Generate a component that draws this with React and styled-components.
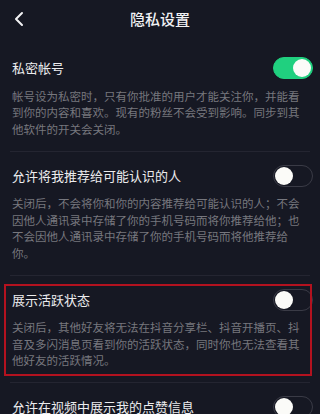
import styled, { createGlobalStyle } from "styled-components";
import { useState } from "react";

const GlobalStyle = createGlobalStyle`
  html, body {
    margin: 0;
    padding: 0;
    background: #161823;
    overflow: hidden;
  }
  * {
    box-sizing: border-box;
  }
`;

const settings = [
  {
    title: "私密帐号",
    on: true,
    desc: "帐号设为私密时，只有你批准的用户才能关注你，并能看到你的内容和喜欢。现有的粉丝不会受到影响。同步到其他软件的开关会关闭。",
  },
  {
    title: "允许将我推荐给可能认识的人",
    on: false,
    desc: "关闭后，不会将你和你的内容推荐给可能认识的人；不会因他人通讯录中存储了你的手机号码而将你推荐给他；也不会因他人通讯录中存储了你的手机号码而将他推荐给你。",
  },
  {
    title: "展示活跃状态",
    on: false,
    marked: true,
    desc: "关闭后，其他好友将无法在抖音分享栏、抖音开播页、抖音及多闪消息页看到你的活跃状态，同时你也无法查看其他好友的活跃情况。",
  },
  {
    title: "允许在视频中展示我的点赞信息",
    on: false,
    desc: "关闭后，其他人将无法在视频中看到你的点赞信息。",
  },
];

const App = () => {
  const [values, setValues] = useState(settings.map((s) => s.on));

  const flip = (i) => {
    setValues(values.map((v, k) => (k === i ? !v : v)));
  };

  return (
    <Page>
      <GlobalStyle />
      <Header>
        <Back aria-label="返回">
          <svg width="12" height="16" viewBox="0 0 12 16">
            <path
              d="M9 2 L3 8 L9 14"
              fill="none"
              stroke="#f2f2f4"
              strokeWidth="2"
              strokeLinecap="round"
              strokeLinejoin="round"
            />
          </svg>
        </Back>
        <Title>隐私设置</Title>
      </Header>
      {settings.map((item, i) => (
        <div key={item.title}>
          {i > 0 && <Divider />}
          <Section marked={item.marked}>
            <Row>
              <Label>{item.title}</Label>
              <Switch on={values[i]} onClick={() => flip(i)}>
                <Knob on={values[i]} />
              </Switch>
            </Row>
            <Desc>{item.desc}</Desc>
          </Section>
        </div>
      ))}
    </Page>
  );
};

const Page = styled.div`
  width: 320px;
  height: 414px;
  overflow: hidden;
  background: #161823;
  font-family: "Noto Sans CJK SC", "Noto Sans", sans-serif;
`;

const Header = styled.div`
  position: relative;
  height: 44px;
  display: flex;
  align-items: center;
  justify-content: center;
  padding-bottom: 6px;
`;

const Back = styled.div`
  position: absolute;
  left: 11px;
  top: 10px;
  width: 16px;
  height: 18px;
  display: flex;
  align-items: center;
  justify-content: center;
`;

const Title = styled.div`
  color: #f1f1f3;
  font-size: 15px;
  font-weight: 500;
  line-height: 20px;
`;

const Section = styled.div`
  position: relative;
  padding: 12px 0 13.5px 12px;

  &::after {
    content: "";
    display: ${(p) => (p.marked ? "block" : "none")};
    position: absolute;
    left: 4px;
    right: 8px;
    top: 8px;
    bottom: 6px;
    border: 2px solid #b3121f;
    pointer-events: none;
  }
`;

const Row = styled.div`
  height: 24px;
  display: flex;
  align-items: center;
  justify-content: space-between;
  padding-right: 7px;
`;

const Label = styled.div`
  color: #ececee;
  font-size: 13px;
  line-height: 20px;
`;

const Switch = styled.div`
  width: 40px;
  height: 22px;
  border-radius: 11px;
  padding: 1px;
  display: flex;
  justify-content: ${(p) => (p.on ? "flex-end" : "flex-start")};
  background: ${(p) => (p.on ? "#20d07f" : "transparent")};
  border: 1px solid ${(p) => (p.on ? "#20d07f" : "#3a3b46")};
  cursor: pointer;
`;

const Knob = styled.div`
  width: 18px;
  height: 18px;
  border-radius: 50%;
  background: #fbfbf8;
`;

const Desc = styled.p`
  margin: 7.5px 0 0;
  max-width: 292px;
  color: #76777e;
  font-size: 11.5px;
  line-height: 16.5px;
`;

const Divider = styled.div`
  height: 1px;
  margin: 0 10px;
  background: #242531;
`;

export default App;
